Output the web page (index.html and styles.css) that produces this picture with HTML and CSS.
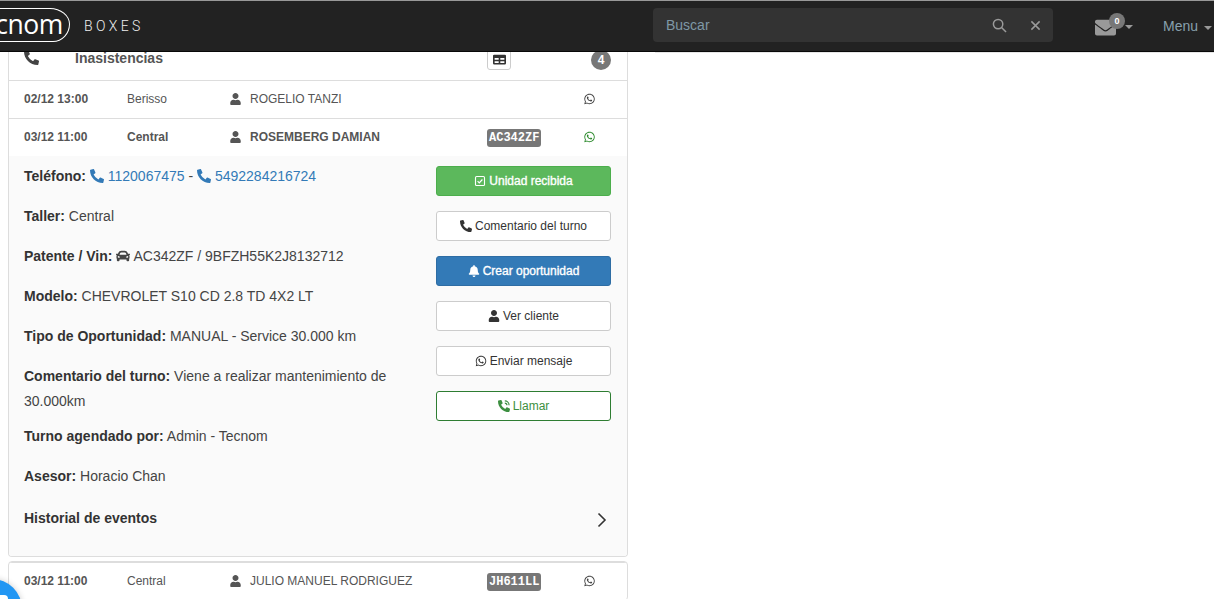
FILE: index.html
```html
<!DOCTYPE html>
<html lang="es">
<head>
<meta charset="utf-8">
<title>Tecnom Boxes</title>
<link rel="stylesheet" href="styles.css">
</head>
<body>
<svg class="defs" aria-hidden="true">
  <symbol id="i-phone" viewBox="0 0 512 512"><path d="M497.39 361.8l-112-48a24 24 0 0 0-28 6.9l-49.6 60.6A370.66 370.66 0 0 1 130.6 204.11l60.6-49.6a23.94 23.94 0 0 0 6.9-28l-48-112A24.16 24.16 0 0 0 122.6.61l-104 24A24 24 0 0 0 0 48c0 256.5 207.9 464 464 464a24 24 0 0 0 23.4-18.6l24-104a24.29 24.29 0 0 0-14.01-27.6z"/></symbol>
  <symbol id="i-user" viewBox="0 0 448 512"><path d="M224 256c70.7 0 128-57.3 128-128S294.7 0 224 0 96 57.3 96 128s57.3 128 128 128zm89.6 32h-16.7c-22.2 10.2-46.9 16-72.9 16s-50.6-5.8-72.9-16h-16.7C60.2 288 0 348.2 0 422.4V464c0 26.5 21.5 48 48 48h352c26.5 0 48-21.5 48-48v-41.6c0-74.2-60.2-134.4-134.4-134.4z"/></symbol>
  <symbol id="i-wa" viewBox="0 0 448 512"><path d="M380.9 97.1C339 55.1 283.2 32 223.9 32c-122.4 0-222 99.6-222 222 0 39.1 10.2 77.3 29.6 111L0 480l117.7-30.9c32.4 17.7 68.9 27 106.1 27h.1c122.3 0 224.1-99.6 224.1-222 0-59.3-25.2-115-67.1-157zm-157 341.6c-33.2 0-65.7-8.9-94-25.7l-6.7-4-69.8 18.3L72 359.2l-4.4-7c-18.5-29.4-28.2-63.3-28.2-98.2 0-101.7 82.8-184.5 184.6-184.5 49.3 0 95.6 19.2 130.4 54.1 34.8 34.9 56.2 81.2 56.1 130.5 0 101.8-84.9 184.6-186.6 184.6zm101.2-138.2c-5.5-2.8-32.8-16.2-37.9-18-5.1-1.9-8.8-2.8-12.5 2.8-3.7 5.6-14.3 18-17.6 21.8-3.2 3.7-6.5 4.2-12 1.4-32.6-16.3-54-29.1-75.5-66-5.7-9.8 5.7-9.1 16.3-30.3 1.8-3.7.9-6.9-.5-9.7-1.4-2.8-12.5-30.1-17.1-41.2-4.5-10.8-9.1-9.3-12.5-9.5-3.2-.2-6.9-.2-10.6-.2-3.7 0-9.7 1.4-14.8 6.9-5.1 5.6-19.4 19-19.4 46.3 0 27.3 19.9 53.7 22.6 57.4 2.8 3.7 39.1 59.7 94.8 83.8 35.2 15.2 49 16.5 66.6 13.9 10.7-1.6 32.8-13.4 37.4-26.4 4.6-13 4.6-24.1 3.2-26.4-1.3-2.5-5-3.9-10.5-6.6z"/></symbol>
  <symbol id="i-mail" viewBox="0 0 512 512"><path d="M502.3 190.8c3.9-3.1 9.7-.2 9.7 4.7V400c0 26.5-21.5 48-48 48H48c-26.5 0-48-21.5-48-48V195.6c0-5 5.7-7.8 9.7-4.7 22.4 17.4 52.1 39.5 154.1 113.6 21.1 15.4 56.7 47.8 92.2 47.6 35.7.3 72-32.8 92.3-47.6 102-74.1 131.6-96.3 154-113.7zM256 320c23.2.4 56.6-29.2 73.4-41.4 132.7-96.3 142.8-104.7 173.4-128.7 5.8-4.5 9.2-11.5 9.2-18.9v-19c0-26.5-21.5-48-48-48H48C21.5 64 0 85.5 0 112v19c0 7.4 3.4 14.3 9.2 18.9 30.6 23.9 40.7 32.4 173.4 128.7 16.8 12.2 50.2 41.8 73.4 41.4z"/></symbol>
  <symbol id="i-car" viewBox="0 0 512 512"><path d="M499.99 176h-59.87l-16.64-41.6C406.38 91.63 365.57 64 319.5 64h-127c-46.06 0-86.88 27.63-103.99 70.4L71.87 176H12.01C4.2 176-1.53 183.34.37 190.91l6 24C7.7 220.25 12.5 224 18.01 224h20.07C24.65 235.73 16 252.78 16 272v48c0 16.12 6.16 30.67 16 41.93V416c0 17.67 14.33 32 32 32h32c17.67 0 32-14.33 32-32v-32h256v32c0 17.67 14.33 32 32 32h32c17.67 0 32-14.33 32-32v-54.07c9.84-11.25 16-25.8 16-41.93v-48c0-19.22-8.65-36.27-22.07-48H494c5.51 0 10.31-3.75 11.64-9.09l6-24c1.89-7.57-3.84-14.91-11.65-14.91zm-352.06-17.83c7.29-18.22 24.94-30.17 44.57-30.17h127c19.63 0 37.28 11.95 44.57 30.17L384 208H128l19.93-49.83zM96 319.8c-19.2 0-32-12.76-32-31.9S76.8 256 96 256s48 28.71 48 47.85-28.8 15.95-48 15.95zm320 0c-19.2 0-48 3.19-48-15.95S396.8 256 416 256s32 12.76 32 31.9-12.8 31.9-32 31.9z"/></symbol>
  <symbol id="i-bell" viewBox="0 0 448 512"><path d="M224 512c35.32 0 63.97-28.65 63.97-64H160.03c0 35.35 28.65 64 63.97 64zm215.39-149.71c-19.32-20.76-55.47-51.99-55.47-154.29 0-77.7-54.48-139.9-127.94-155.16V32c0-17.67-14.32-32-31.98-32s-31.98 14.33-31.98 32v20.84C118.56 68.1 64.08 130.3 64.08 208c0 102.3-36.15 133.53-55.47 154.29-6 6.45-8.66 14.16-8.61 21.71.11 16.4 12.98 32 32.1 32h383.8c19.12 0 32-15.6 32.1-32 .05-7.55-2.61-15.27-8.61-21.71z"/></symbol>
  <symbol id="i-check" viewBox="0 0 16 16"><rect x="2" y="2" width="12" height="12" rx="1.5" fill="none" stroke="currentColor" stroke-width="1.5"/><path d="M4.8 8.2l2.2 2.2 4.2-4.4" fill="none" stroke="currentColor" stroke-width="1.6"/></symbol>
  <symbol id="i-call" viewBox="0 0 512 512"><path d="M497.39 361.8l-112-48a24 24 0 0 0-28 6.9l-49.6 60.6A370.66 370.66 0 0 1 130.6 204.11l60.6-49.6a23.94 23.94 0 0 0 6.9-28l-48-112A24.16 24.16 0 0 0 122.6.61l-104 24A24 24 0 0 0 0 48c0 256.5 207.9 464 464 464a24 24 0 0 0 23.4-18.6l24-104a24.29 24.29 0 0 0-14.01-27.6z"/><path d="M290 130a92 92 0 0 1 92 92M290 40a182 182 0 0 1 182 182" fill="none" stroke="currentColor" stroke-width="50"/></symbol>
  <symbol id="i-table" viewBox="0 0 16 16"><path fill-rule="evenodd" d="M1.5 2h13A1.5 1.5 0 0 1 16 3.5v9a1.5 1.5 0 0 1-1.5 1.5h-13A1.5 1.5 0 0 1 0 12.500v-9A1.500 1.500 0 0 1 1.500 2zM2 6v2.400h5V6zm7 0v2.400h5V6zm-7 4v2.200h5V10zm7 0v2.200h5V10z"/></symbol>
</svg>

<header class="navbar">
  <div class="brand">
    <span class="logo"><span class="logo-text">tecnom</span></span>
    <span class="product">BOXES</span>
  </div>
  <div class="search">
    <span class="search-label">Buscar</span>
    <svg class="search-icon" viewBox="0 0 16 16"><circle cx="6.500" cy="6.500" r="5" /><path d="M10.200 10.200L15 15"/></svg>
    <svg class="search-clear" viewBox="0 0 12 12"><path d="M1.500 1.500l9 9M10.500 1.500l-9 9"/></svg>
  </div>
  <div class="mail">
    <svg class="mail-icon"><use href="#i-mail"/></svg>
    <span class="mail-badge">0</span>
    <span class="caret"></span>
  </div>
  <div class="menu">Menu<span class="caret"></span></div>
</header>

<div class="page">
  <main class="column">
    <section class="card">
      <div class="list-head">
        <svg class="head-phone"><use href="#i-phone"/></svg>
        <span class="head-title">Inasistencias</span>
        <span class="table-btn"><svg class="table-icon"><use href="#i-table"/></svg></span>
        <span class="count">4</span>
      </div>
      <div class="row">
        <span class="c-date">02/12 13:00</span>
        <span class="c-place">Berisso</span>
        <svg class="c-user"><use href="#i-user"/></svg>
        <span class="c-name">ROGELIO TANZI</span>
        <span class="c-tag"></span>
        <svg class="c-wa"><use href="#i-wa"/></svg>
      </div>
      <div class="row row-open">
        <span class="c-date">03/12 11:00</span>
        <span class="c-place">Central</span>
        <svg class="c-user"><use href="#i-user"/></svg>
        <span class="c-name">ROSEMBERG DAMIAN</span>
        <span class="c-tag"><span class="plate">AC342ZF</span></span>
        <svg class="c-wa c-wa-green"><use href="#i-wa"/></svg>
      </div>
      <div class="details">
        <div class="info">
          <p class="line"><b>Teléfono:</b> <a class="link"><svg class="ic"><use href="#i-phone"/></svg> 1120067475</a> - <a class="link"><svg class="ic"><use href="#i-phone"/></svg> 5492284216724</a></p>
          <p class="line"><b>Taller:</b> Central</p>
          <p class="line"><b>Patente / Vin:</b> <svg class="ic"><use href="#i-car"/></svg> AC342ZF / 9BFZH55K2J8132712</p>
          <p class="line"><b>Modelo:</b> CHEVROLET S10 CD 2.8 TD 4X2 LT</p>
          <p class="line"><b>Tipo de Oportunidad:</b> MANUAL - Service 30.000 km</p>
          <p class="line line-tight"><b>Comentario del turno:</b> Viene a realizar mantenimiento de 30.000km</p>
          <p class="line"><b>Turno agendado por:</b> Admin - Tecnom</p>
          <p class="line"><b>Asesor:</b> Horacio Chan</p>
        </div>
        <div class="actions">
          <a class="btn btn-green"><svg class="ic-s"><use href="#i-check"/></svg> Unidad recibida</a>
          <a class="btn"><svg class="ic-s"><use href="#i-phone"/></svg> Comentario del turno</a>
          <a class="btn btn-blue"><svg class="ic-s"><use href="#i-bell"/></svg> Crear oportunidad</a>
          <a class="btn"><svg class="ic-s"><use href="#i-user"/></svg> Ver cliente</a>
          <a class="btn"><svg class="ic-s"><use href="#i-wa"/></svg> Enviar mensaje</a>
          <a class="btn btn-outline-green"><svg class="ic-s"><use href="#i-call"/></svg> Llamar</a>
        </div>
        <div class="history">
          <b>Historial de eventos</b>
          <svg class="chevron" viewBox="0 0 10 16"><path d="M1.500 1.500L8 8l-6.500 6.500"/></svg>
        </div>
      </div>
    </section>
    <section class="card">
      <div class="row">
        <span class="c-date">03/12 11:00</span>
        <span class="c-place">Central</span>
        <svg class="c-user"><use href="#i-user"/></svg>
        <span class="c-name">JULIO MANUEL RODRIGUEZ</span>
        <span class="c-tag"><span class="plate">JH611LL</span></span>
        <svg class="c-wa"><use href="#i-wa"/></svg>
      </div>
    </section>
  </main>
  <aside class="side"></aside>
</div>

<div class="fab"><span class="fab-dot"></span></div>
</body>
</html>
```

FILE: styles.css
```css
* { box-sizing: border-box; }
html, body { margin: 0; height: 100%; overflow: hidden; }
body { background: #fff; color: #333; font: 14px/20px "Liberation Sans", Arial, sans-serif; }
.defs { display: none; }
svg { fill: currentColor; }

.navbar {
  position: fixed; top: 0; left: 0; right: 0; height: 52px; z-index: 10;
  display: flex; align-items: center;
  background: #222; border-top: 1px solid #999; border-bottom: 1px solid #080808;
}
.brand { width: 653px; display: flex; align-items: center; overflow: hidden; height: 100%; }
.logo {
  width: 100px; height: 34px; margin-left: -30px; margin-top: -2px; flex: none;
  border: 1.500px solid #fff; border-radius: 16px 20px 17px 16px / 16px 16px 18px 18px;
  display: flex; align-items: center; justify-content: flex-end; padding-right: 6px;
}
.logo-text { color: #fff; font: 500 26.500px/30px "Open Sans", sans-serif; letter-spacing: -.4px; margin-top: -3px; white-space: nowrap; }
.product { margin-left: 14px; margin-top: -1px; color: #eee; font: 300 14px/20px Roboto, sans-serif; letter-spacing: 3.400px; }
.search {
  width: 400px; height: 34px; flex: none; margin-top: -2px; padding: 0 12px 0 13px;
  display: flex; align-items: center; background: #333; border-radius: 4px;
}
.search-label { flex: 1; color: #7f98a6; }
.search-icon { width: 15px; height: 15px; fill: none; stroke: #9a9a9a; stroke-width: 1.600; margin-right: 23px; }
.search-clear { width: 11px; height: 11px; fill: none; stroke: #9a9a9a; stroke-width: 1.600; }
.mail { width: 68px; margin-left: 42px; flex: none; display: flex; align-items: center; position: relative; color: #999; }
.mail-icon { width: 21px; height: 21px; margin-top: 2px; }
.mail-badge {
  position: absolute; left: 14px; top: -2px; width: 16px; height: 16px; border-radius: 50%;
  background: #777; color: #fff; font: 700 9px/16px "Liberation Sans", sans-serif; text-align: center;
}
.caret { display: inline-block; border-top: 4px solid #999; border-left: 4px solid transparent; border-right: 4px solid transparent; margin-left: 9px; margin-top: 2px; vertical-align: middle; }
.menu { color: #88a0ad; white-space: nowrap; }
.menu .caret { margin-left: 6px; }

.page { padding: 36px 0 0 8px; display: flex; align-items: flex-start; }
.column { width: 620px; flex: none; }
.side { flex: 1; margin: 16px 0 0 27px; border-top: 1px solid #e6e6e6; }
.card { background: #fff; border: 1px solid #ddd; border-radius: 4px; margin-bottom: 4px; overflow: hidden; }
.card:first-child { border-top: 0; }

.list-head { height: 44px; display: flex; align-items: center; padding: 0 16px 0 15px; color: #555; }
.head-phone { width: 15px; height: 15px; margin-top: -2px; color: #444; flex: none; }
.head-title { width: 412px; margin-left: 36px; font-weight: 700; }
.table-btn { width: 24px; height: 21px; margin-top: 3px; display: flex; align-items: center; justify-content: center; border: 1px solid #ccc; border-radius: 3px; }
.table-icon { width: 13px; height: 13px; color: #333; }
.count { margin-left: 80px; width: 20px; height: 20px; border-radius: 50%; background: #777; color: #fff; font-size: 12px; font-weight: 700; line-height: 20px; text-align: center; margin-top: 4px; }

.row { height: 38px; display: flex; align-items: center; padding: 0 0 2px 15px; border-top: 1px solid #ddd; font-size: 12px; color: #555; }
.row-open { font-weight: 700; }
.c-date { width: 103px; font-weight: 700; flex: none; }
.c-place { width: 103px; flex: none; }
.c-user { width: 11px; height: 12px; margin-right: 9px; flex: none; }
.c-name { width: 237px; flex: none; }
.c-tag { width: 97px; flex: none; }
.c-wa { width: 11px; height: 12px; flex: none; color: #444; }
.c-wa-green { color: #2e8b2e; }
.plate { display: inline-block; height: 18px; padding: 0 2px; border-radius: 3px; background: #777; color: #fff; font: 700 12px/18px "Liberation Mono", monospace; }

.details { display: grid; grid-template-columns: 412px 175px; padding: 10px 16px 26px 15px; background: #fafafa; }
.line { margin: 0 0 15px; line-height: 25px; color: #444; }
.line b, .history b { color: #333; }
.line-tight { margin-bottom: 10px; }
.info { margin-top: -2px; }
.link { color: #337ab7; }
.ic { width: 14px; height: 14px; vertical-align: -2px; }
.actions { display: flex; flex-direction: column; gap: 15px; }
.btn { height: 30px; display: flex; align-items: center; justify-content: center; gap: 3px; border: 1px solid #ccc; border-radius: 3px; background: #fff; color: #333; font-size: 12px; }
.btn-green { background: #5cb85c; border-color: #4cae4c; color: #fff; -webkit-text-stroke: .35px #fff; }
.btn-blue { background: #337ab7; border-color: #2e6da4; color: #fff; -webkit-text-stroke: .35px #fff; }
.btn-outline-green { border-color: #2e7d32; color: #3c8f40; }
.ic-s { width: 12px; height: 12px; flex: none; }
.history { grid-column: 1 / -1; display: flex; justify-content: space-between; align-items: center; height: 25px; margin-top: 1px; }
.chevron { width: 10px; height: 16px; fill: none; stroke: #333; stroke-width: 1.600; margin: 4px 4px 0 0; }

.fab { position: fixed; left: -38px; top: 579px; width: 60px; height: 60px; border-radius: 50%; background: #2196f3; box-shadow: 0 0 6px rgba(0,0,0,.2); z-index: 5; }
.fab-dot { display: block; width: 18px; height: 16px; margin: 16px 0 0 28px; background: #fff; border-radius: 4px; }
```
